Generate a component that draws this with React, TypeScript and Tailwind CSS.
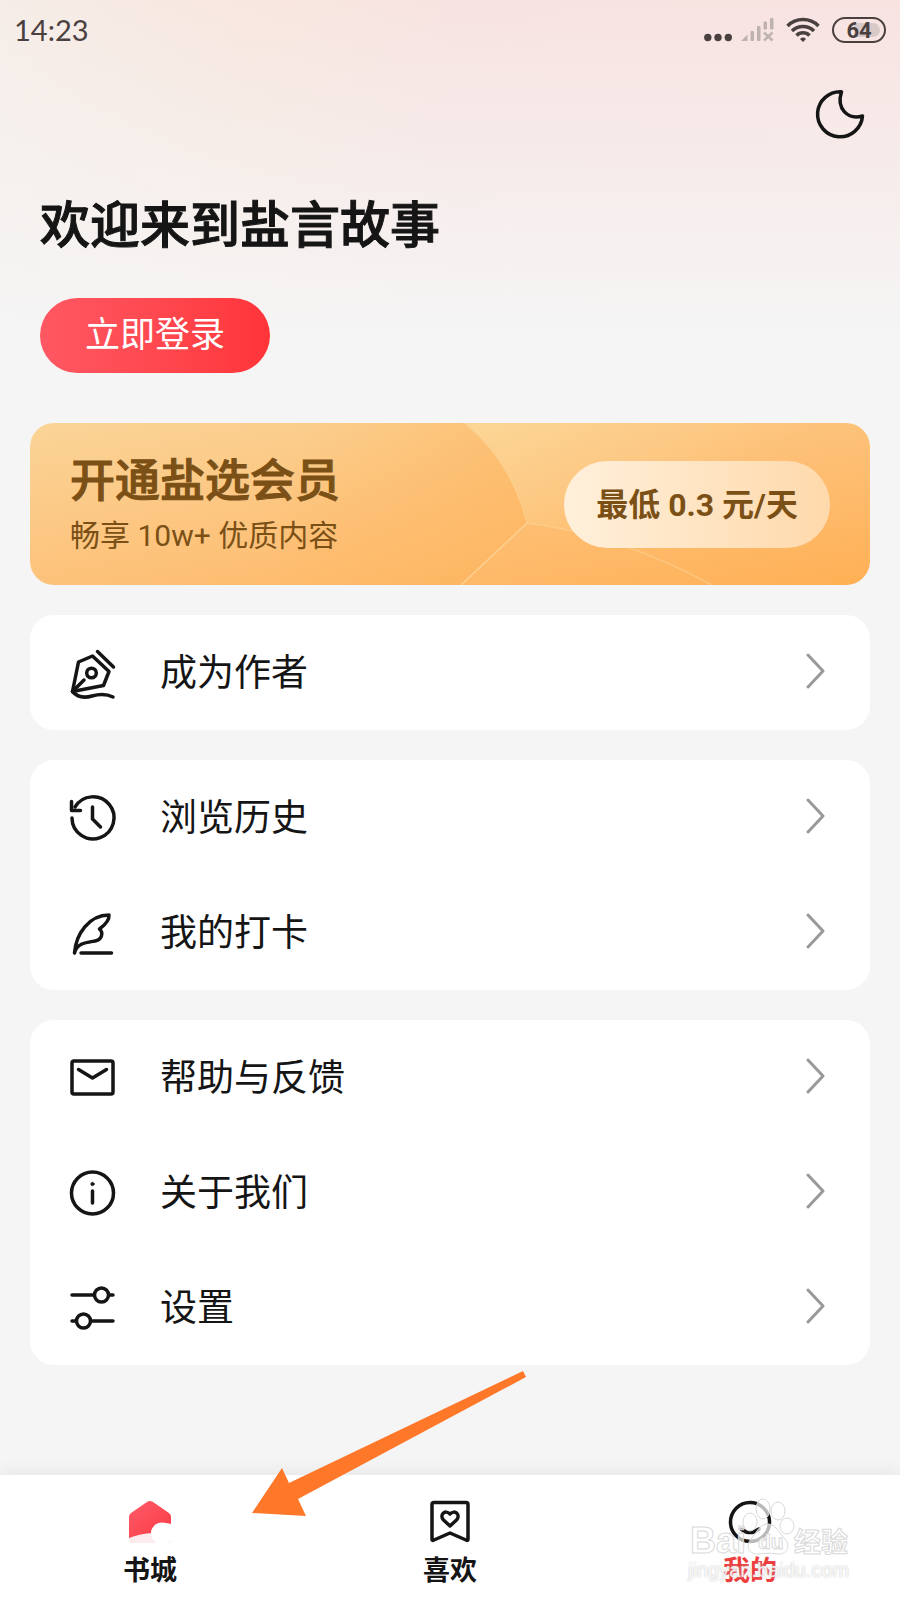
import type { ReactNode } from "react";

const stroke = {
  fill: "none",
  stroke: "currentColor",
  strokeWidth: 3.5,
  strokeLinecap: "round" as const,
  strokeLinejoin: "round" as const,
};

function RowIcon({ children }: { children: ReactNode }) {
  return (
    <svg viewBox="0 0 48 48" className="h-12 w-12 shrink-0 overflow-visible" {...stroke}>
      {children}
    </svg>
  );
}

const penIcon = (
  <RowIcon>
    <path d="M3.5 42.5 L9.5 13 L23.500 7 L40 22.500 L34.500 36.500 Z" />
    <path d="M3.500 42.500 L15 31" />
    <circle cx="22.500" cy="24" r="4.800" />
    <path d="M28.500 2.500 L44.500 18" />
    <path d="M3.500 42.500 C9 49 16 49 23 47 C32 44.500 38 45 44 48" />
  </RowIcon>
);

const historyIcon = (
  <RowIcon>
    <path d="M3 24 A21 21 0 1 0 6 13" />
    <path d="M2.500 7.500 V16.500 H11.500" />
    <path d="M23.500 13 V25 L31.500 33" />
  </RowIcon>
);

const featherIcon = (
  <RowIcon>
    <path d="M5.500 44 C7 25 20 6 40 6 C40.500 12 36 16 30.500 20 C35 24 32.500 31 26 32 C17 33.500 8 34 5.500 44 Z" />
    <path d="M12 44 H42.500" />
  </RowIcon>
);

const mailIcon = (
  <RowIcon>
    <rect x="3" y="7" width="41" height="33" rx="2" />
    <path d="M9.500 15.500 L23.500 24 L37.500 15.500" />
  </RowIcon>
);

const infoIcon = (
  <RowIcon>
    <circle cx="23.500" cy="24" r="21" />
    <path d="M23.500 22 V34" />
    <circle cx="23.500" cy="15" r="1.600" fill="currentColor" strokeWidth="1" />
  </RowIcon>
);

const settingsIcon = (
  <RowIcon>
    <path d="M3 11 H25 M40 11 H44" />
    <circle cx="32.500" cy="11" r="7" />
    <path d="M3 37 H7 M22 37 H44" />
    <circle cx="14.500" cy="37" r="7" />
  </RowIcon>
);

const groups = [
  [{ label: "成为作者", icon: penIcon }],
  [
    { label: "浏览历史", icon: historyIcon },
    { label: "我的打卡", icon: featherIcon },
  ],
  [
    { label: "帮助与反馈", icon: mailIcon },
    { label: "关于我们", icon: infoIcon },
    { label: "设置", icon: settingsIcon },
  ],
];

function StatusBar() {
  return (
    <div className="flex h-15 items-center justify-between px-3.5 text-[#4a4040]">
      <span className="font-['Lato'] text-[29px] leading-15">14:23</span>
      <div className="flex items-center gap-3">
        <svg viewBox="0 0 70 26" className="h-6.5 w-[70px]">
          <g fill="currentColor">
            <circle cx="3.800" cy="20.500" r="3.700" />
            <circle cx="14" cy="20.500" r="3.700" />
            <circle cx="24.300" cy="20.500" r="3.700" />
          </g>
          <g fill="#bfb3b2">
            <path d="M37 24 L43.500 17.500 V24 Z" />
            <rect x="46.500" y="14" width="3.500" height="10" rx="1" />
            <rect x="53" y="9" width="3.500" height="15" rx="1" />
            <rect x="59.500" y="4.500" width="3.500" height="8" rx="1" />
            <rect x="66" y="1" width="3.500" height="11.500" rx="1" />
            <path d="M60 15.500 L68.500 23.500 M68.500 15.500 L60 23.500" stroke="#bfb3b2" strokeWidth="2.500" />
          </g>
        </svg>
        <svg viewBox="0 0 34 26" className="h-6.5 w-[34px]" fill="none" stroke="currentColor" strokeWidth="3.500">
          <path d="M1.500 9 A22 22 0 0 1 32.500 9" />
          <path d="M6 14 A15.500 15.500 0 0 1 28 14" />
          <path d="M10.500 18.500 A9 9 0 0 1 23.500 18.500" />
          <path d="M14 22 A4.300 4.300 0 0 1 20 22 L17 25 Z" fill="currentColor" stroke="none" />
        </svg>
        <span className="relative flex h-6.5 w-[54px] items-center justify-center rounded-full border-2 border-current font-['Roboto'] text-[22px] font-bold">
          <span className="absolute inset-y-1 right-1 left-5 rounded-r-full bg-[#d8cac9]" />
          <span className="relative">64</span>
        </span>
      </div>
    </div>
  );
}

function VipCard() {
  return (
    <section className="relative flex h-[162px] items-center justify-between overflow-hidden rounded-3xl bg-linear-to-br from-[#fad497] via-[#fdc27a] to-[#ffb054] px-10 text-[#7b5016]">
      <svg viewBox="0 0 840 162" className="absolute inset-0 h-full w-full" fill="none">
        <defs>
          <linearGradient id="vip-glow" x1="440" y1="0" x2="560" y2="162" gradientUnits="userSpaceOnUse">
            <stop offset="0" stopColor="#fcdc9e" stopOpacity=".6" />
            <stop offset="1" stopColor="#fcdc9e" stopOpacity="0" />
          </linearGradient>
          <linearGradient id="vip-shade" x1="280" y1="0" x2="500" y2="120" gradientUnits="userSpaceOnUse">
            <stop offset="0" stopColor="#fdb65f" stopOpacity="0" />
            <stop offset="1" stopColor="#fdb65f" stopOpacity=".6" />
          </linearGradient>
        </defs>
        <path d="M434 0 Q480 36 497 100 L431 162 H250 V0 Z" fill="url(#vip-shade)" />
        <path d="M434 0 Q480 36 497 100 Q590 112 682 162 H840 V0 Z" fill="url(#vip-glow)" />
        <path d="M434 0 Q480 36 497 100" stroke="#fdd596" strokeOpacity=".6" />
        <path d="M431 162 L497 100" stroke="#fed79b" strokeOpacity=".8" strokeWidth="1.500" />
        <path d="M497 100 Q590 112 682 162" stroke="#fed79b" strokeOpacity=".5" strokeWidth="1.500" />
      </svg>
      <div className="relative pt-1">
        <h2 className="text-[45px] leading-15 font-medium [-webkit-text-stroke:1px]">开通盐选会员</h2>
        <p className="text-[30px] leading-12">畅享 10w+ 优质内容</p>
      </div>
      <button className="relative h-[87px] rounded-full bg-linear-to-r from-[#fff0db] to-[#ffd9ab] px-8 pt-0.5 text-[32px] font-bold">
        最低 0.3 元/天
      </button>
    </section>
  );
}

function Watermark() {
  return (
    <div aria-hidden="true" className="pointer-events-none absolute right-12 bottom-5 w-[164px] font-['Liberation_Sans'] font-normal text-white/80">
      <svg viewBox="0 0 164 64" className="h-16 w-full overflow-visible" fill="#ffffff" fillOpacity=".7" stroke="#d9d9d9">
        <ellipse cx="62" cy="26" rx="7" ry="9" />
        <ellipse cx="75" cy="13" rx="7" ry="10" />
        <ellipse cx="90" cy="15" rx="7" ry="9" />
        <ellipse cx="99" cy="30" rx="7" ry="8" />
        <path d="M80 28 C88 28 92 38 97 43 C103 50 99 59 89 58 C83 57 77 57 71 58 C61 59 57 50 63 43 C68 38 71 28 80 28 Z" />
        <text x="2" y="57" fontSize="36" fontWeight="700">Bai</text>
        <text x="70" y="53" fontSize="21" fontWeight="700">du</text>
        <text x="106" y="56" fontSize="27" fontWeight="700" fontFamily="'Noto Sans CJK SC', sans-serif">经验</text>
      </svg>
      <p className="text-[20px] leading-5 [text-shadow:0_0_2px_#bdbdbd]">jingyan.baidu.com</p>
    </div>
  );
}

function TabBar() {
  return (
    <nav className="relative grid h-[125px] grid-cols-3 bg-white pt-6 text-[27px] font-bold text-[#151515] shadow-[0_-4px_16px_rgba(0,0,0,0.06)]">
      <a href="#books" className="flex flex-col items-center gap-1.5">
        <svg viewBox="0 0 46 46" className="size-11.5">
          <defs>
            <linearGradient id="house" x1="0" y1="0" x2="1" y2="1">
              <stop offset="0" stopColor="#ff5a68" />
              <stop offset="1" stopColor="#f93c46" />
            </linearGradient>
          </defs>
          <path d="M2 31 H44 V42 Q44 44 42 44 H4 Q2 44 2 42 Z" fill="#fdebed" />
          <path d="M2 18 Q2 15.500 4 14 L20 3 Q23 1 26 3 L42 14 Q44 15.500 44 18 V25 C34 22 25 26 24 34 Q12 35 2 39 Z" fill="url(#house)" />
          <circle cx="35" cy="34.500" r="11" fill="#fff" />
        </svg>
        <span>书城</span>
      </a>
      <a href="#likes" className="flex flex-col items-center gap-1.5">
        <svg viewBox="0 0 46 46" className="size-11.5" {...stroke}>
          <path d="M5 5.500 Q5 3.500 7 3.500 H39 Q41 3.500 41 5.500 V40.500 Q41 42 39 41 L23 34 L7 41 Q5 42 5 40.500 Z" />
          <path d="M23 27 L16.500 21 C12 16 18 10 23 15 C28 10 34 16 29.500 21 Z" />
        </svg>
        <span>喜欢</span>
      </a>
      <a href="#mine" className="flex flex-col items-center gap-1.5">
        <svg viewBox="0 0 46 46" className="size-11.5" {...stroke}>
          <circle cx="23" cy="23" r="19.500" />
          <path d="M14 30 Q23 37 32 30" />
        </svg>
        <span className="text-[#ed3f40]">我的</span>
      </a>
      <Watermark />
    </nav>
  );
}

export default function App() {
  return (
    <div className="relative flex min-h-screen flex-col bg-[#f5f5f5] font-['Roboto','Noto_Sans_CJK_SC',sans-serif] text-[#151515]">
      <div className="flex flex-1 flex-col bg-[linear-gradient(to_bottom,transparent,#f5f5f5_340px),linear-gradient(to_right,#f6ede8,#f8e7df_28%,#f7e3e1_50%,#f8e3e1)]">
        <StatusBar />
        <header className="flex flex-col items-start pr-[34px] pl-10">
          <button aria-label="夜间模式" className="mt-7 self-end">
            <svg viewBox="0 0 52 52" className="size-13" {...stroke}>
              <path d="M27.500 3.800 A22.500 22.500 0 1 0 48.500 28 C34 32 22 21 27.500 3.800 Z" />
            </svg>
          </button>
          <h1 className="mt-[50px] text-[50px] leading-18 font-medium [-webkit-text-stroke:1px]">欢迎来到盐言故事</h1>
          <button className="mt-9 h-[75px] rounded-full bg-linear-to-r from-[#ff5863] to-[#ff3439] px-[45px] pt-0.5 text-[35px] text-white">
            立即登录
          </button>
        </header>

        <main className="mt-[50px] flex flex-col gap-[30px] px-[30px] pb-[108px]">
          <VipCard />
          {groups.map((rows, i) => (
            <ul key={i} className="rounded-3xl bg-white">
              {rows.map((row) => (
                <li key={row.label}>
                  <button className="flex h-[115px] w-full items-center pr-11 pl-[39px] text-left text-[37px]">
                    {row.icon}
                    <span className="ml-[43px] flex-1 pt-0.5">{row.label}</span>
                    <svg viewBox="0 0 20 36" className="mb-1 h-9 w-5 text-[#999999]" {...stroke} strokeWidth="3">
                      <path d="M2 2 L17 18 L2 34" />
                    </svg>
                  </button>
                </li>
              ))}
            </ul>
          ))}
        </main>
      </div>

      <TabBar />

      {/* pointer to the first tab */}
      <svg viewBox="0 0 280 150" className="pointer-events-none absolute bottom-[80px] left-[250px] w-[280px]" fill="#ff7729">
        <path d="M2 143 L32 98 L39 113 L273 1 L276 7 L48 129 L56 146 Z" />
      </svg>
    </div>
  );
}
